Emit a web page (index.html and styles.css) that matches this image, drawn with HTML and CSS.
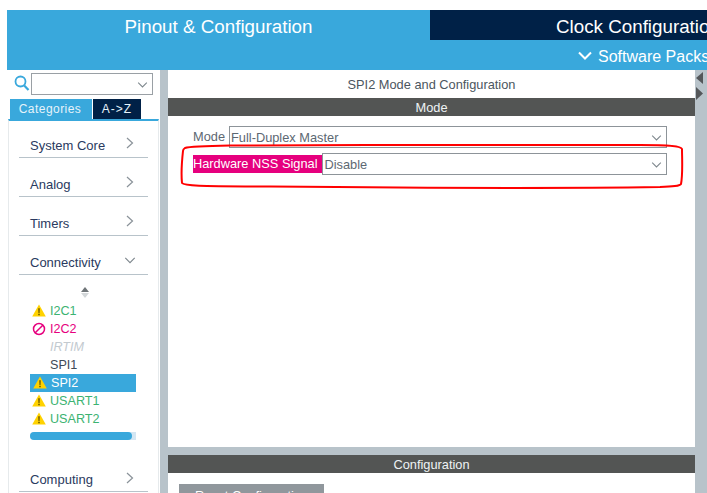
FILE: index.html
```html
<!DOCTYPE html>
<html lang="en">
<head>
<meta charset="utf-8">
<title>Pinout &amp; Configuration</title>
<link rel="stylesheet" href="styles.css">
</head>
<body>
<svg width="0" height="0" class="defs">
  <symbol id="warn" viewBox="0 0 14 13"><path d="M7 .5 13.800 12.600H.2Z" fill="#ffd200"/><path d="M6.300 4.200h1.400l-.2 4.800h-1zM6.300 9.800h1.400v1.400H6.300z" fill="#5a4a00"/></symbol>
  <symbol id="chev-r" viewBox="0 0 8 12"><path d="M1 1 6.500 6 1 11" fill="none" stroke="#8a9299" stroke-width="1.200"/></symbol>
  <symbol id="chev-d" viewBox="0 0 14 10"><path d="M1.500 2 7 7.500 12.500 2" fill="none" stroke="#7d868c" stroke-width="1.300"/></symbol>
</svg>
<div class="app">
  <header class="tabs">
    <div class="tabs-row">
      <div class="tab tab-active">Pinout &amp; Configuration</div>
      <div class="tab tab-dark">Clock Configuration</div>
    </div>
    <div class="subrow">
      <div class="packs">
        <svg class="packs-chev" width="14" height="10" viewBox="0 0 14 10"><path d="M1 1.500 7 7.500 13 1.500" fill="none" stroke="#fff" stroke-width="2"/></svg>
        <span>Software Packs</span>
      </div>
    </div>
  </header>
  <div class="body">
    <aside class="side">
      <div class="search">
        <svg class="search-ico" width="16" height="17" viewBox="0 0 16 17"><circle cx="6.500" cy="6.500" r="5" fill="none" stroke="#39a8dc" stroke-width="1.800"/><path d="M10.200 10.500 14.500 15" stroke="#39a8dc" stroke-width="2.200"/></svg>
        <div class="search-box"><svg class="chev" width="11" height="8"><use href="#chev-d"/></svg></div>
      </div>
      <div class="seg">
        <div class="seg-a">Categories</div>
        <div class="seg-b">A-&gt;Z</div>
      </div>
      <div class="cat-panel">
        <div class="cat"><span>System Core</span><svg class="cr" width="8" height="12"><use href="#chev-r"/></svg></div>
        <div class="cat"><span>Analog</span><svg class="cr" width="8" height="12"><use href="#chev-r"/></svg></div>
        <div class="cat"><span>Timers</span><svg class="cr" width="8" height="12"><use href="#chev-r"/></svg></div>
        <div class="cat"><span>Connectivity</span><svg class="cd" width="12" height="9"><use href="#chev-d"/></svg></div>
        <div class="sort"><svg width="8" height="11" viewBox="0 0 8 11"><path d="M4 0 8 5H0Z" fill="#6f7578"/><path d="M4 11 8 6H0Z" fill="#d3d7d9"/></svg></div>
        <ul class="periph">
          <li class="ok"><svg class="ico warn" width="14" height="13"><use href="#warn"/></svg>I2C1</li>
          <li class="err"><svg class="ico" width="14" height="14" viewBox="0 0 14 14"><circle cx="7" cy="7" r="5.500" fill="none" stroke="#e6007e" stroke-width="1.500"/><path d="M3.200 10.800 10.800 3.200" stroke="#e6007e" stroke-width="1.500"/></svg>I2C2</li>
          <li class="off"><span class="ico"></span>IRTIM</li>
          <li class="plain"><span class="ico"></span>SPI1</li>
          <li class="sel"><svg class="ico warn" width="14" height="13"><use href="#warn"/></svg>SPI2</li>
          <li class="ok"><svg class="ico warn" width="14" height="13"><use href="#warn"/></svg>USART1</li>
          <li class="ok"><svg class="ico warn" width="14" height="13"><use href="#warn"/></svg>USART2</li>
        </ul>
        <div class="scroll"><div class="scroll-thumb"></div></div>
        <div class="cat cat-last"><span>Computing</span><svg class="cr" width="8" height="12"><use href="#chev-r"/></svg></div>
      </div>
    </aside>
    <main class="main">
      <section class="mode">
        <div class="mode-title">SPI2 Mode and Configuration</div>
        <div class="bar">Mode</div>
        <div class="fields">
          <div class="field">
            <label class="lbl">Mode</label>
            <div class="select">Full-Duplex Master<svg class="chev" width="11" height="8"><use href="#chev-d"/></svg></div>
          </div>
          <div class="field">
            <label class="lbl lbl-hot">Hardware NSS Signal</label>
            <div class="select">Disable<svg class="chev" width="11" height="8"><use href="#chev-d"/></svg></div>
          </div>
        </div>
      </section>
      <section class="config">
        <div class="bar">Configuration</div>
        <div class="config-body"><div class="reset">Reset Configuration</div></div>
      </section>
    </main>
    <div class="rail">
      <svg width="8" height="30" viewBox="0 0 8 30"><path d="M7 2V14L0 8Z" fill="#54575a"/><path d="M0 17V30L7 23.500Z" fill="#54575a"/></svg>
    </div>
  </div>
</div>
<svg class="annot" width="520" height="55" viewBox="0 0 520 55"><path d="M13 11C12 20 11 33 12 43C14 46 30 46 100 46.500C250 48 420 48 490 47C503 46.500 510 46 511 44C513 34 512 18 512 9C511 6 500 5 470 5C380 4 200 5 60 5.500C30 6 18 7 15 8C13.500 9 13 10 13 11Z" fill="none" stroke="#f00" stroke-width="2"/></svg>
</body>
</html>
```

FILE: styles.css
```css
* { box-sizing: border-box; }
html, body { margin: 0; height: 100%; overflow: hidden; background: #fff; }
body { position: relative; padding: 10px 0 0 7px; font-family: "Liberation Sans", Arial, sans-serif; color: #3e4a56; }
.defs { position: absolute; }
.app { width: 700px; height: 483px; display: flex; flex-direction: column; overflow: hidden; }

.tabs { flex: 0 0 60px; background: #39a8dc; color: #fff; overflow: hidden; }
.tabs-row { display: flex; height: 30px; }
.tab { font-size: 18.800px; line-height: 34px; height: 30px; }
.tab-active { flex: 0 0 423px; text-align: center; }
.tab-dark { flex: 1; background: #002147; padding-left: 126px; white-space: nowrap; overflow: hidden; }
.subrow { height: 30px; position: relative; overflow: hidden; }
.packs { position: absolute; left: 571px; top: 1px; display: flex; align-items: center; gap: 7px; height: 30px; font-size: 16px; white-space: nowrap; }
.packs span { margin-top: 1px; margin-left: -1px; }
.packs-chev { flex: none; }

.body { flex: 1; display: flex; min-height: 0; background: #b8c3ca; }

.side { flex: 0 0 153px; background: #fff; display: flex; flex-direction: column; }
.search { display: flex; align-items: center; height: 25px; padding: 2px 0 0 7px; gap: 1px; }
.search-ico { flex: none; margin-bottom: 1px; }
.search-box { width: 122px; height: 22px; border: 1px solid #9aa0a5; position: relative; }
.chev { position: absolute; right: 4px; top: 7px; }
.seg { display: flex; margin: 4px 0 0 3px; height: 20px; font-size: 12px; color: #e6f3fa; }
.seg-a { width: 82px; background: #39a8dc; line-height: 21px; text-align: center; letter-spacing: .45px; padding-right: 2px; }
.seg-b { width: 48px; margin-left: 1px; background: #002147; line-height: 21px; text-align: center; letter-spacing: 1px; }
.cat-panel { flex: 1; margin: 0 1px; border-top: 2px solid #39a8dc; border-left: 1px solid #e6eaec; border-right: 1px solid #e6eaec; padding: 0 10px; display: flex; flex-direction: column; min-height: 0; }
.cat { flex: none; height: 39px; display: flex; align-items: center; justify-content: space-between; padding: 15px 14px 0 11px; border-bottom: 1px solid #b8c3ca; font-size: 13px; color: #2a3a60; }
.cat:first-child { height: 37px; padding-top: 13px; }
.cr { margin-top: -5px; }
.cd { margin-right: -2px; margin-top: -5px; }
.sort { height: 24px; text-align: center; padding-top: 12px; line-height: 0; margin-left: 2px; }
.periph { list-style: none; margin: 3px 0 0 11px; padding: 0; }
.periph li { height: 18px; display: flex; align-items: center; width: 106px; font-size: 12.600px; line-height: 16px; padding-bottom: 1px; white-space: nowrap; }
.ico { flex: none; width: 14px; margin: 0 4px 0 2px; }
.warn { margin-top: -1px; }
.ok { color: #3cb371; }
.err { color: #e6007e; }
.off { color: #c3cad0; font-style: italic; }
.plain { color: #3e4a56; }
.periph .sel { background: #39a8dc; color: #fff; padding-left: 1px; }
.scroll { width: 106px; height: 8px; margin: 4px 0 0 11px; background: #d3e6f3; border-radius: 4px 0 0 4px; flex: none; }
.scroll-thumb { width: 102px; height: 8px; background: #39a8dc; border-radius: 4px; }
.cat-last { margin-top: auto; height: 35px; padding-top: 11px; margin-bottom: 1px; }
.cat-last .cr { margin-top: -3px; }

.main { flex: 0 0 527px; margin-left: 8px; display: flex; flex-direction: column; gap: 8px; min-height: 0; }
.mode { flex: 0 0 377px; background: #fff; }
.mode-title { height: 28px; font-size: 12.800px; line-height: 30px; text-align: center; color: #4b5660; }
.bar { height: 18px; background: #535554; color: #eef3f5; font-size: 12.800px; line-height: 19px; text-align: center; }
.fields { padding: 10px 28px 0 25px; display: flex; flex-direction: column; gap: 5px; }
.field { display: flex; align-items: center; height: 22px; font-size: 12.800px; color: #5d6872; }
.lbl { flex: none; padding-right: 4px; line-height: 18px; }
.lbl-hot { background: #e6007e; color: #fff; padding: 0 5px 0 0; height: 18px; }
.select { flex: 1; height: 22px; border: 1px solid #8d9499; line-height: 21px; padding-left: 1px; position: relative; }
.config { flex: 1; background: #fff; min-height: 0; overflow: hidden; }
.config-body { padding: 11px; }
.reset { width: 145px; height: 24px; background: #90979c; color: #fff; font-size: 12.800px; text-align: center; line-height: 24px; }

.rail { flex: 1; line-height: 0; padding: 0 0 0 1px; }
.annot { position: absolute; left: 170px; top: 140px; pointer-events: none; }
```
